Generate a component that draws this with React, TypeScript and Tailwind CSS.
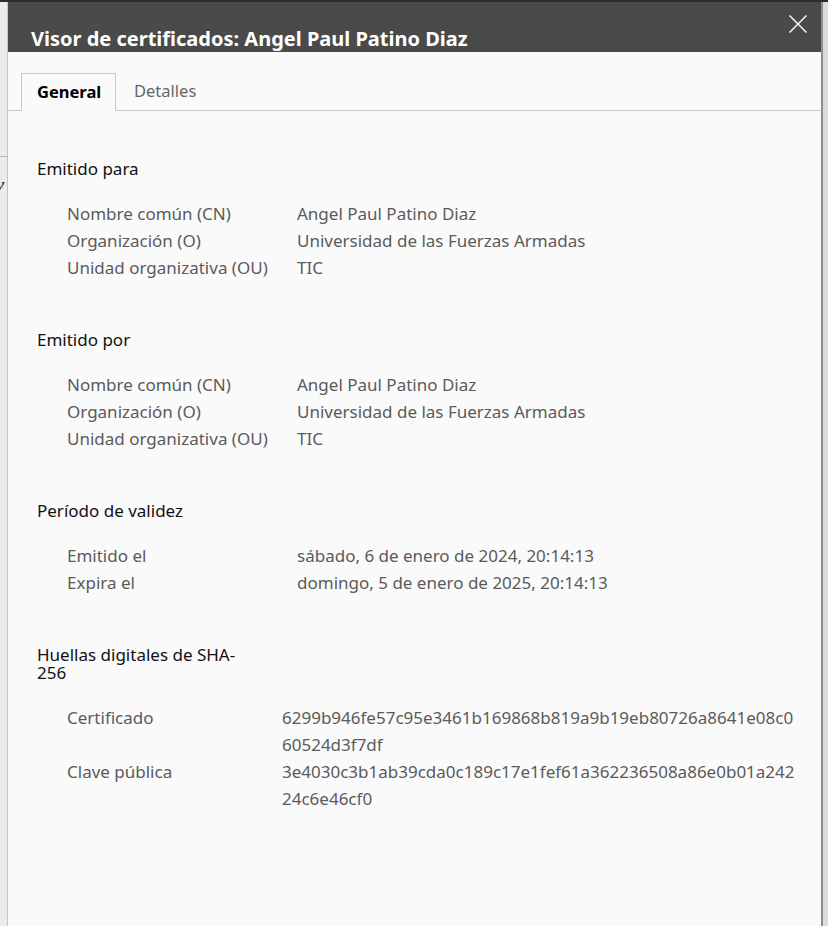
type Row = { label: string; value: string[] };

const sections: { title: string; labelWidth: string; rows: Row[] }[] = [
  {
    title: 'Emitido para',
    labelWidth: 'w-[230px]',
    rows: [
      { label: 'Nombre común (CN)', value: ['Angel Paul Patino Diaz'] },
      { label: 'Organización (O)', value: ['Universidad de las Fuerzas Armadas'] },
      { label: 'Unidad organizativa (OU)', value: ['TIC'] },
    ],
  },
  {
    title: 'Emitido por',
    labelWidth: 'w-[230px]',
    rows: [
      { label: 'Nombre común (CN)', value: ['Angel Paul Patino Diaz'] },
      { label: 'Organización (O)', value: ['Universidad de las Fuerzas Armadas'] },
      { label: 'Unidad organizativa (OU)', value: ['TIC'] },
    ],
  },
  {
    title: 'Período de validez',
    labelWidth: 'w-[230px]',
    rows: [
      { label: 'Emitido el', value: ['sábado, 6 de enero de 2024, 20:14:13'] },
      { label: 'Expira el', value: ['domingo, 5 de enero de 2025, 20:14:13'] },
    ],
  },
  {
    title: 'Huellas digitales de SHA-256',
    labelWidth: 'w-[215px]',
    rows: [
      {
        label: 'Certificado',
        value: ['6299b946fe57c95e3461b169868b819a9b19eb80726a8641e08c0', '60524d3f7df'],
      },
      {
        label: 'Clave pública',
        value: ['3e4030c3b1ab39cda0c189c17e1fef61a362236508a86e0b01a242', '24c6e46cf0'],
      },
    ],
  },
];

const Section = ({ title, labelWidth, rows }: (typeof sections)[number]) => (
  <section className="mb-[50px]">
    <h3 className="w-[212px] text-[17px] leading-[18px] text-[#111]">{title}</h3>
    <div className="mt-[22px] pl-[30px]">
      {rows.map((row) => (
        <div key={row.label} className="flex text-[17px] leading-[27px] text-[#5a5a5a]">
          <div className={`${labelWidth} shrink-0`}>{row.label}</div>
          <div>
            {row.value.map((line) => (
              <div key={line}>{line}</div>
            ))}
          </div>
        </div>
      ))}
    </div>
  </section>
);

export default function App() {
  return (
    <div
      className="flex h-[926px] w-[828px] overflow-hidden border-t-2 border-[#2d2d2d] bg-[#ececec]"
      style={{ fontFamily: '"Noto Sans", "Open Sans", sans-serif' }}
    >
      <div className="relative w-[7px] shrink-0">
        <div className="mt-[154px] h-px bg-[#b4b4b4]" />
        <span className="absolute left-[-3px] top-[170px] font-serif text-[17px] italic text-[#333]">v</span>
      </div>

      <div className="flex w-[816px] shrink-0 flex-col border-r-2 border-l border-[#8e8e8e] border-l-[#c4c4c4] bg-[#fafafa]">
        <header className="relative h-[50px] shrink-0 bg-[#4a4a4a] pl-[23px] pt-[24px]">
          <h1 className="text-[20px] font-bold leading-[26px] text-white">
            Visor de certificados: Angel Paul Patino Diaz
          </h1>
          <button className="absolute right-[14px] top-[13px] text-white">
            <svg width="18" height="18" viewBox="0 0 18 18" stroke="currentColor" strokeWidth="1.4" fill="none">
              <path d="M0.5 0.5 L17.5 17.5 M17.5 0.5 L0.5 17.5" />
            </svg>
          </button>
        </header>

        <nav className="mt-[21px] flex items-end border-b border-[#c8c8c8] pl-[13px]">
          <div className="-mb-px flex h-[38px] w-[95px] items-center border border-b-0 border-[#c8c8c8] bg-[#fafafa] pl-[15px] text-[16.5px] font-bold text-black">
            General
          </div>
          <div className="flex h-[37px] items-center pl-[18px] text-[16.5px] text-[#666]">Detalles</div>
        </nav>

        <div className="pl-[29px] pt-[49px]">
          {sections.map((s) => (
            <Section key={s.title} {...s} />
          ))}
        </div>
      </div>

      <div className="flex-1 bg-[#dcdcdc]" />
    </div>
  );
}
